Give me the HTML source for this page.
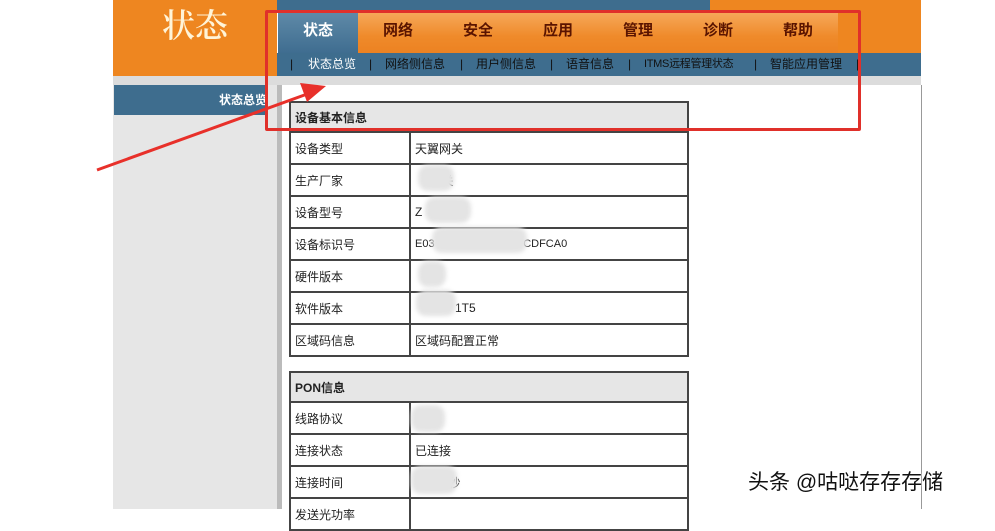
<!DOCTYPE html>
<html><head><meta charset="utf-8"><style>
*{margin:0;padding:0;box-sizing:border-box}
body{width:995px;height:509px;overflow:hidden;background:#fff;position:relative;font-family:"Liberation Sans","Noto Sans CJK SC",sans-serif;font-size:12px;color:#222}
.abs{position:absolute}
.tab{position:absolute;top:12px;height:41px;width:80px;text-align:center;line-height:38px;font-size:15px;font-weight:bold;color:#5a1400;background:linear-gradient(#f6a95a,#ef8a2a 60%,#ec8222)}
.tab.act{background:linear-gradient(#5f8aa8,#3f6d90);color:#fff}
.sub{position:absolute;top:53px;left:277px;width:644px;height:23px;background:#3e6d8e}
.s{position:absolute;top:56px;font-size:12px;line-height:16px;color:#111;white-space:nowrap}
table{position:absolute;left:289px;width:400px;border-collapse:collapse}
td{border:2px solid #444;height:32px;font-size:12px;padding-left:4px;color:#222}
td.l{width:120px}
th{border:2px solid #444;height:30px;background:#e6e6e6;text-align:left;padding-left:4px;font-size:12px}
.blur{position:absolute;background:#e4e4e4;border-radius:10px;filter:blur(2px)}
</style></head><body>
<div class="abs" style="left:113px;top:0;width:164px;height:76px;background:#ee8620"></div>
<div class="abs" style="left:162px;top:5px;font-size:33px;line-height:38px;color:#fff4d8;font-weight:600;font-family:'Noto Serif CJK SC',serif">状态</div>
<div class="abs" style="left:277px;top:0;width:433px;height:12px;background:#3e6d8e"></div>
<div class="abs" style="left:710px;top:0;width:211px;height:53px;background:#ee8620"></div>
<div class="tab act" style="left:278px">状态</div>
<div class="tab" style="left:358px">网络</div>
<div class="tab" style="left:438px">安全</div>
<div class="tab" style="left:518px">应用</div>
<div class="tab" style="left:598px">管理</div>
<div class="tab" style="left:678px">诊断</div>
<div class="tab" style="left:758px">帮助</div>
<div class="sub"></div>
<span class="s" style="left:290px">|</span>
<span class="s" style="left:308px;color:#fff">状态总览</span>
<span class="s" style="left:369px">|</span>
<span class="s" style="left:385px">网络侧信息</span>
<span class="s" style="left:460px">|</span>
<span class="s" style="left:476px">用户侧信息</span>
<span class="s" style="left:550px">|</span>
<span class="s" style="left:566px">语音信息</span>
<span class="s" style="left:628px">|</span>
<span class="s" style="left:644px;font-size:11px;letter-spacing:-0.3px">ITMS远程管理状态</span>
<span class="s" style="left:754px">|</span>
<span class="s" style="left:770px">智能应用管理</span>
<span class="s" style="left:856px">|</span>
<div class="abs" style="left:113px;top:76px;width:808px;height:9px;background:#dcdcdc"></div>
<div class="abs" style="left:113px;top:85px;width:164px;height:424px;background:#e6e6e6"></div>
<div class="abs" style="left:114px;top:85px;width:153px;height:30px;background:#3e6d8e;color:#fff;font-weight:bold;text-align:right;line-height:30px;font-size:12px">状态总览</div>
<div class="abs" style="left:277px;top:85px;width:645px;height:424px;background:#fff;border-left:5px solid #bbb;border-right:1px solid #999"></div>
<table style="top:101px">
<tr><th colspan="2">设备基本信息</th></tr>
<tr><td class="l">设备类型</td><td>天翼网关</td></tr>
<tr><td class="l">生产厂家</td><td>&nbsp;&nbsp;&nbsp;&nbsp;&nbsp;&nbsp;&nbsp;&nbsp;关</td></tr>
<tr><td class="l">设备型号</td><td>Z</td></tr>
<tr><td class="l">设备标识号</td><td style="font-size:11px">E03&nbsp;&nbsp;&nbsp;&nbsp;&nbsp;&nbsp;&nbsp;&nbsp;&nbsp;&nbsp;&nbsp;&nbsp;&nbsp;&nbsp;&nbsp;&nbsp;&nbsp;&nbsp;&nbsp;&nbsp;&nbsp;&nbsp;&nbsp;&nbsp;&nbsp;&nbsp;&nbsp;&nbsp;&nbsp;CDFCA0</td></tr>
<tr><td class="l">硬件版本</td><td></td></tr>
<tr><td class="l">软件版本</td><td>&nbsp;&nbsp;&nbsp;&nbsp;&nbsp;&nbsp;&nbsp;&nbsp;&nbsp;&nbsp;&nbsp;&nbsp;1T5</td></tr>
<tr><td class="l">区域码信息</td><td>区域码配置正常</td></tr>
</table>
<table style="top:371px">
<tr><th colspan="2">PON信息</th></tr>
<tr><td class="l">线路协议</td><td></td></tr>
<tr><td class="l">连接状态</td><td>已连接</td></tr>
<tr><td class="l">连接时间</td><td>&nbsp;&nbsp;&nbsp;&nbsp;&nbsp;&nbsp;&nbsp;&nbsp;&nbsp;&nbsp;秒</td></tr>
<tr><td class="l">发送光功率</td><td></td></tr>
</table>
<div class="blur" style="left:418px;top:165px;width:36px;height:26px"></div>
<div class="blur" style="left:425px;top:197px;width:46px;height:26px"></div>
<div class="blur" style="left:432px;top:227px;width:95px;height:26px"></div>
<div class="blur" style="left:418px;top:261px;width:28px;height:26px"></div>
<div class="blur" style="left:416px;top:290px;width:40px;height:26px"></div>
<div class="blur" style="left:411px;top:405px;width:34px;height:27px"></div>
<div class="blur" style="left:411px;top:466px;width:46px;height:28px"></div>
<div class="abs" style="left:265px;top:10px;width:596px;height:121px;border:3px solid #e0302a;border-radius:2px"></div>
<svg class="abs" style="left:0;top:0" width="995" height="509">
<line x1="97" y1="170" x2="310" y2="93" stroke="#e8302a" stroke-width="3"/>
<polygon points="326,86 300,83 307,102" fill="#e8302a"/>
</svg>
<div class="abs" style="left:748px;top:466px;font-size:21px;color:#111;text-shadow:0 0 2px #fff,0 0 2px #fff">头条 @咕哒存存存储</div>
</body></html>
